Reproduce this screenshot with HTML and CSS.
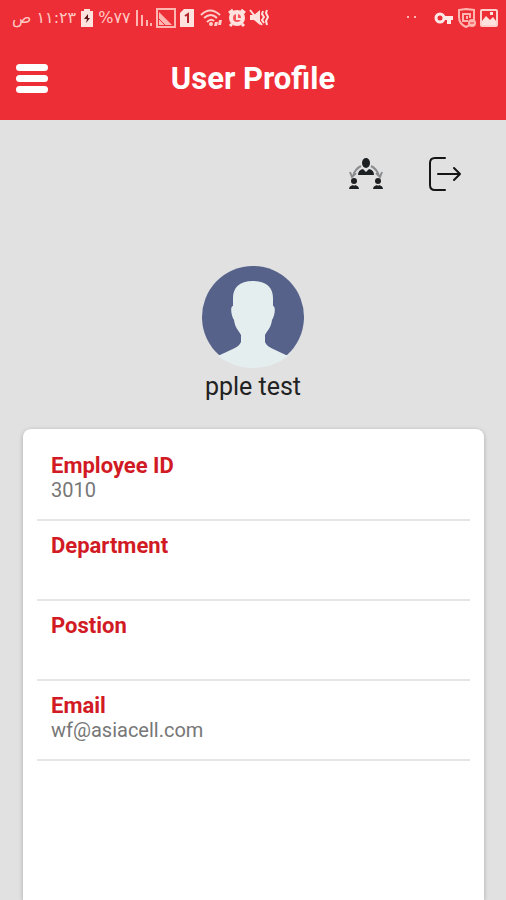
FILE: index.html
```html
<!DOCTYPE html>
<html lang="en">
  <head>
    <meta charset="UTF-8" />
    <meta name="viewport" content="width=device-width, initial-scale=1.0" />
    <title>User Profile</title>
    <link rel="stylesheet" href="styles.css">
  </head>
  <body>
    <header>
      <div class="status-bar">
        <div class="status-group">
          <span class="status-text clock" dir="rtl" lang="ar">١١:٢٣ ص</span>
          <svg width="14" height="20" viewBox="0 0 14 20">
            <path fill="#ffe3df" d="M4 1h6v2h3v16H1V3h3z" />
            <path fill="#5c1418" d="M8 6l-4 5h3l-1 4 4-5H8z" />
          </svg>
          <span class="status-text battery">%٧٧</span>
          <svg width="18" height="20" viewBox="0 0 18 20">
            <path fill="none" stroke="#ffb5b0" stroke-width="2" d="M2 2v16M7 7v11M12 12v6M16 15v3" />
          </svg>
          <svg width="20" height="20" viewBox="0 0 20 20">
            <path fill="none" stroke="#ffb5b0" stroke-width="2" d="M1 1h18v18H1z" />
            <path fill="#ffb5b0" d="M3 4l13 13H3z" />
            <path stroke="#ee2e36" d="M3 11l6 6" />
          </svg>
          <svg width="16" height="20" viewBox="0 0 16 20">
            <path fill="#ffe3df" d="M5 1h10v18H1V5z" />
            <path fill="none" stroke="#b3262d" stroke-width="2" d="M6 8l3-2v9" />
          </svg>
          <svg class="wifi" width="23" height="20" viewBox="0 0 23 20">
            <path fill="none" stroke="#ffd0cb" stroke-width="2" d="M1 7q9-9 19 0M4 10q7-6 13 0M7 14q4-4 7-1" />
            <circle cx="11" cy="16" r="2" fill="#ffd0cb" />
            <path fill="#ffd0cb" d="M15 14h3l-1 4h-3zM19 12h3l-1 5h-3z" />
          </svg>
          <svg class="alarm" width="18" height="20" viewBox="0 0 18 20">
            <path stroke="#ffe3df" stroke-width="3" d="M1 5l4-3M17 5l-4-3M4 16l-2 2M14 16l2 2" />
            <circle cx="9" cy="10" r="8" fill="#ffe3df" />
            <circle cx="9" cy="10" r="4" fill="#f5565b" />
            <path fill="none" stroke="#ffe3df" stroke-width="2" d="M9 6v5h4" />
          </svg>
          <svg class="mute" width="20" height="20" viewBox="0 0 20 20">
            <path fill="#ffe3df" d="M1 7h4l6-5v15l-6-5H1z" />
            <path fill="none" stroke="#ffe3df" stroke-width="2" d="M1 2l12 15M14 3l-1 3 2 3-2 3 2 3M18 2l-1 3 2 4-2 4 1 4" />
          </svg>
        </div>
        <div class="status-group">
          <svg class="dots" width="12" height="20" viewBox="0 0 12 20">
            <path fill="#ffb5b0" d="M0 8h2v2H0zM7 8h2v2H7z" />
          </svg>
          <svg width="20" height="20" viewBox="0 0 20 20">
            <circle cx="6" cy="10" r="4" fill="none" stroke="#ffe9e6" stroke-width="3" />
            <path fill="#ffe9e6" d="M10 8h9v4h-2v4h-4v-4h-3z" />
          </svg>
          <svg width="20" height="20" viewBox="0 0 20 20">
            <path fill="none" stroke="#ffb5b0" stroke-width="2" d="M2 2l7-1 8 1v9q-1 5-8 8Q2 16 2 9z" />
            <path fill="none" stroke="#ffb5b0" stroke-width="2" d="M13 10V6H6v7h5M10 8v3" />
            <circle cx="15" cy="15" r="4" fill="#ffb5b0" />
            <path fill="none" stroke="#ee2e36" d="M13 15h4" />
          </svg>
          <svg width="18" height="20" viewBox="0 0 18 20">
            <rect x="1" y="2" width="16" height="16" rx="1" fill="none" stroke="#ffd0cb" stroke-width="2" />
            <path fill="#ffe3df" d="M2 13l4-5 4 4 3-3 3 4v4H2z" />
            <path fill="#ffe3df" d="M10 4h3v3h-3z" />
          </svg>
        </div>
      </div>
      <nav>
        <button class="menu-button" type="button" aria-label="Menu">
          <span></span>
          <span></span>
          <span></span>
        </button>
        <h1>User Profile</h1>
      </nav>
    </header>

    <main>
      <div class="actions">
        <button type="button" aria-label="Team">
          <svg width="36" height="34" viewBox="0 0 36 34">
            <path fill="none" stroke="#8b8d8f" stroke-width="2" d="M13 9q-6 3-8 10M2 15l2 5 4-4M23 9q6 3 8 10M28 16l4 4 2-5" />
            <g fill="#1d2023">
              <ellipse cx="18" cy="6" rx="4" ry="5" />
              <path d="M10 18q0-5 5-6l3 3 3-3q5 1 5 6z" />
              <ellipse cx="6" cy="24" rx="3" ry="3" />
              <path d="M1 32q0-3 4-4l1 1 1-1q4 1 4 4z" />
              <ellipse cx="30" cy="24" rx="3" ry="3" />
              <path d="M25 32q0-3 4-4l1 1 1-1q4 1 4 4z" />
            </g>
          </svg>
        </button>
        <button type="button" aria-label="Log out">
          <svg width="34" height="36" viewBox="0 0 34 36">
            <path fill="none" stroke="#151515" stroke-width="2" stroke-linecap="round" stroke-linejoin="round" d="M17 2H7Q2 2 2 7v22q0 5 5 5h10M10 18h22M26 12l6 6-6 6" />
          </svg>
        </button>
      </div>

      <section class="profile">
        <svg width="104" height="104" viewBox="0 0 104 104">
          <circle cx="52" cy="52" r="51" fill="#e5eaea" />
          <path fill="#56628a" d="M18 90A51 51 0 1 1 86 90z" />
          <path fill="#e5eeee" d="M52 16C38 16 32 23 32 33v8c-3 0-2 10 1 14 1 8 5 11 7 15v7c-2 6-12 8-23 14q15 12 35 12t35-12c-11-6-21-8-23-14v-7c2-4 6-7 7-15 3-4 4-14 1-14v-8c0-10-6-17-20-17z" />
        </svg>
        <h2>pple test</h2>
      </section>

      <dl class="card">
        <div class="row">
          <dt>Employee ID</dt>
          <dd>3010</dd>
        </div>
        <div class="row">
          <dt>Department</dt>
          <dd></dd>
        </div>
        <div class="row">
          <dt>Postion</dt>
          <dd></dd>
        </div>
        <div class="row">
          <dt>Email</dt>
          <dd>wf@asiacell.com</dd>
        </div>
      </dl>
    </main>
  </body>
</html>
```
FILE: styles.css
```css
* {
  box-sizing: border-box;
}

body {
  font-family: Roboto, "Liberation Sans", sans-serif;
  margin: 0;
  min-height: 100vh;
  display: flex;
  flex-direction: column;
  background-color: #e1e1e1;
  color: #222;
}

button {
  background: none;
  border: none;
  padding: 0;
  cursor: pointer;
}

svg {
  display: block;
  flex-shrink: 0;
}

header {
  background-color: #ee2e36;
  color: white;
}

/* phone status bar */
.status-bar {
  display: flex;
  justify-content: space-between;
  height: 36px;
  padding: 0 8px 0 12px;
}

.status-group {
  display: flex;
  align-items: center;
  gap: 4px;
}

.status-text {
  font-family: "DejaVu Sans", sans-serif;
  font-size: 16px;
  line-height: 20px;
  color: #ffc9c4;
  white-space: nowrap;
}

.status-group svg + svg {
  margin-left: -1px;
}

.status-group .wifi,
.status-group .alarm {
  margin-left: 1px;
}

.dots {
  margin-right: 12px;
}

nav {
  display: grid;
  grid-template-columns: 32px 1fr 32px;
  align-items: center;
  height: 84px;
  padding: 0 16px;
}

.menu-button {
  display: flex;
  flex-direction: column;
  gap: 4px;
}

.menu-button span {
  height: 7px;
  border-radius: 4px;
  background-color: white;
}

h1 {
  margin: 0;
  padding-top: 2px;
  font-size: 31px;
  line-height: 36px;
  font-weight: bold;
  text-align: center;
}

main {
  flex: 1;
  display: flex;
  flex-direction: column;
}

.actions {
  display: flex;
  justify-content: flex-end;
  align-items: center;
  gap: 44px;
  padding: 36px 44px 0;
}

.profile {
  display: flex;
  flex-direction: column;
  align-items: center;
  padding-top: 73px;
}

h2 {
  margin: 0;
  font-size: 25px;
  line-height: 36px;
  font-weight: normal;
}

.card {
  flex: 1;
  margin: 24px 22px 0 23px;
  padding: 12px 14px;
  background-color: white;
  border-radius: 8px 8px 0 0;
  box-shadow: 0 1px 4px rgba(0, 0, 0, 0.25);
}

.row {
  height: 80px;
  padding: 12px 14px 0;
  border-bottom: 2px solid #e6e6e6;
}

dt {
  font-size: 22px;
  line-height: 26px;
  font-weight: bold;
  color: #d11a24;
}

dd {
  margin: 0;
  font-size: 20px;
  line-height: 22px;
  color: #777;
}
```
